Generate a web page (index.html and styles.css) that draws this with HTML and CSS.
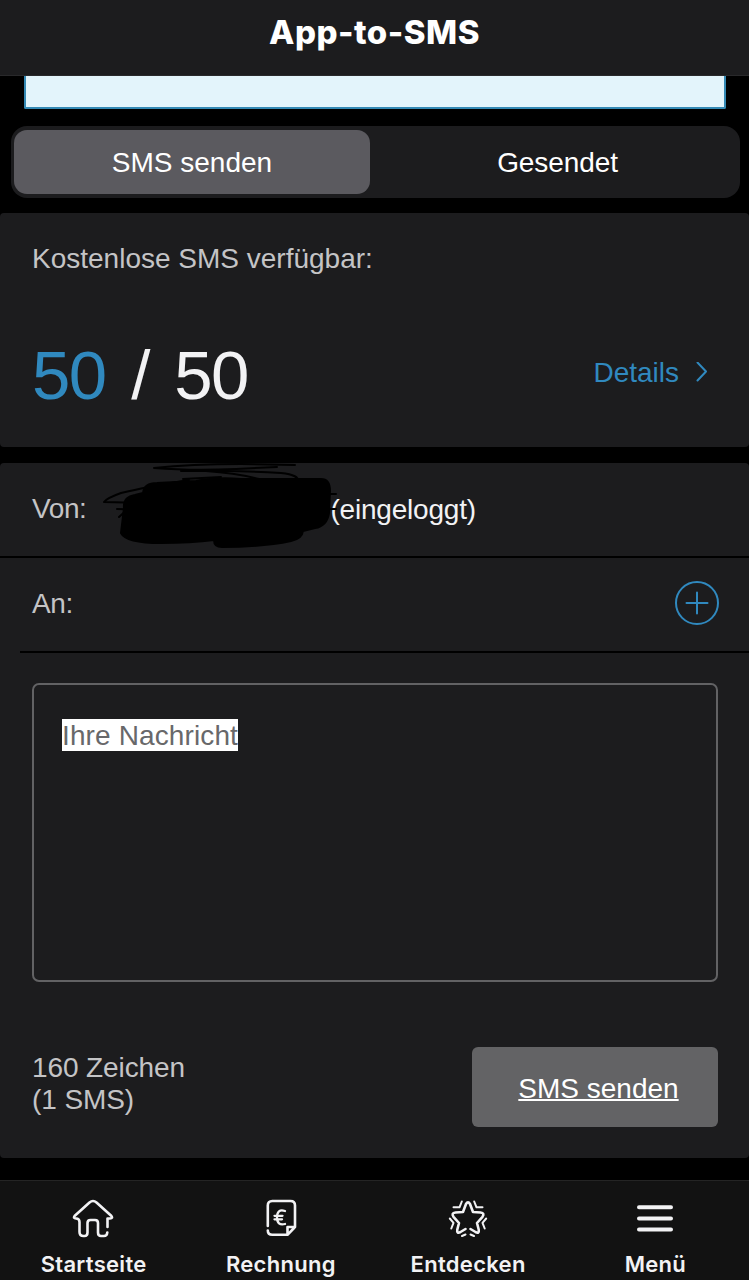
FILE: index.html
```html
<!DOCTYPE html>
<html lang="de">
<head>
    <meta charset="UTF-8">
    <meta name="viewport" content="width=device-width, initial-scale=1.0">
    <title>App-to-SMS</title>
    <link rel="stylesheet" href="styles.css">
</head>
<body>

<header class="header">
    <h1>App-to-SMS</h1>
</header>

<main>
    <div class="info-box"></div>

    <div class="tabs">
        <button class="tab active">SMS senden</button>
        <button class="tab">Gesendet</button>
    </div>

    <section class="card quota">
        <p class="label">Kostenlose SMS verfügbar:</p>
        <div class="quota-row">
            <p class="count"><span class="count-left">50</span> / 50</p>
            <a class="details">Details
                <svg width="14" height="22" viewBox="0 0 14 22"><path d="M2.5 0.5 L11 9.500 L2.5 18.500"/></svg>
            </a>
        </div>
    </section>

    <section class="card message">
        <div class="row">
            <span class="label">Von:</span>
            <svg class="scribble" width="236" height="93" viewBox="100 463 236 93">
                <path class="blob" d="M123 509 Q122 498 134 496 L142 494 Q143 484 156 484 L195 482 Q215 478 240 480 L320 480 Q329 480 329 492 L328 514 Q326 527 314 529 L302 532 Q301 540 290 542 Q262 548 221 548 Q213 548 213 541 Q190 544 160 544 Q125 544 120 534 Z"/>
                <path d="M294 466 L240 465 Q190 465 153 469 Q190 472 235 470 L276 468 M180 472 Q230 471 280 474 Q299 476 297 483 M205 472 Q235 474 258 480 M182 480 L220 478 M188 481 Q145 488 120 494 Q106 499 103 503 L145 504 M116 510 L150 511 M118 518 L128 509 M320 495 L335 495 M320 510 L335 510"/>
            </svg>
            <span class="value">(eingeloggt)</span>
        </div>
        <div class="row row-to">
            <span class="label">An:</span>
            <button class="add">
                <svg width="46" height="46" viewBox="0 0 46 46"><circle cx="23" cy="22" r="21"/><path d="M12.500 22 H33.500 M23 11.500 V32.500"/></svg>
            </button>
        </div>
        <div class="divider"></div>
        <div class="text-field"><span class="placeholder">Ihre Nachricht</span></div>
        <div class="send-row">
            <p class="label">160 Zeichen<br>(1 SMS)</p>
            <button class="send">SMS senden</button>
        </div>
    </section>
</main>

<nav class="nav">
    <a class="nav-item">
        <svg width="44" height="44" viewBox="0 0 44 44"><path d="M36.500 29 V20.500 H39 Q42.300 20.500 40.200 17.800 L25.500 4.500 Q22 1.500 18.500 4.500 L3.800 17.800 Q1.800 20.500 5 20.500 Q8.500 20.500 8.500 24 V34 Q8.500 38 12.500 38 H13.500 Q16.500 38 16.500 34.500 V25 Q16.500 22 19.500 22 H24 Q27 22 27 25 V34.500 Q27 38 30 38 H33 Q36 38 36.300 34.500"/></svg>
        <span>Startseite</span>
    </a>
    <a class="nav-item">
        <svg width="44" height="44" viewBox="-1.5 0 44 44"><path d="M8.300 28 V7.500 Q8.300 3 12.800 3 H31 Q35.500 3 35.500 7.500 V29 L28 36.800 H12.800 Q8.300 36.800 8.300 32.500 M35.500 29 H28 V36.800"/><path class="euro" d="M25.500 13 Q17.500 10.500 17.500 19.300 Q17.500 28 25.500 26 M15 17.800 H23 M15 21.300 H22.500"/></svg>
        <span>Rechnung</span>
    </a>
    <a class="nav-item">
        <svg width="44" height="44" viewBox="-1 0 44 44"><path class="star" d="M19.500 31 L14.500 34 Q10.500 36 11.300 31.500 L13 25 L7.500 18.800 Q5 15 9.500 14.500 L17 14 L20 6 Q22 2.800 24 6 L27 14 L34.500 14.500 Q39 15 36.500 18.800 L31 25 L32.700 31.500 Q33.500 36 29.500 34 L24.500 31"/><path class="rays" d="M15.800 3.500 L13.500 9.300 H7.500 M28.200 3.500 L30.500 9.300 H36.500 M3.800 20.500 L7.500 24.800 L5.300 30.500 M40.200 20.500 L36.500 24.800 L38.700 30.500 M16 38 L19.500 36.500 M28 38 L24.500 36.500"/></svg>
        <span>Entdecken</span>
    </a>
    <a class="nav-item">
        <svg width="44" height="44" viewBox="-1 0 44 44"><path class="bars" d="M6 9.300 H38 M6 20.500 H38 M6 31.500 H38"/></svg>
        <span>Menü</span>
    </a>
</nav>

</body>
</html>
```
FILE: styles.css
```css
* {
    box-sizing: border-box;
}
body {
    font-family: "Liberation Sans", Arial, sans-serif;
    font-size: 28px;
    line-height: 32px;
    margin: 0;
    height: 1280px;
    display: flex;
    flex-direction: column;
    background-color: #000;
    color: #f2f2f4;
    overflow: hidden;
}
h1, p {
    margin: 0;
}
button {
    font: inherit;
    color: inherit;
    border: none;
    padding: 0;
    background: none;
}
svg {
    display: block;
    fill: none;
    stroke: currentColor;
    stroke-width: 2;
    stroke-linecap: round;
    stroke-linejoin: round;
}
.header {
    height: 76px;
    padding-top: 12px;
    background-color: #1c1c1e;
    border-bottom: 1px solid #29292b;
    text-align: center;
}
.header h1 {
    font-family: Inter, sans-serif;
    font-size: 33px;
    line-height: 40px;
    font-weight: 800;
    letter-spacing: 0.5px;
    color: #fff;
}
main {
    flex: 1;
}
.info-box {
    height: 33px;
    margin: 0 23px 0 24px;
    background-color: #e3f4fb;
    border: 2px solid #3489b4;
    border-top: none;
    border-radius: 0 0 2px 2px;
}
.tabs {
    display: flex;
    height: 72px;
    margin: 17px 9px 15px 11px;
    padding: 4px 3px;
    background-color: #1c1c1e;
    border-radius: 16px;
}
.tab {
    flex: 1;
    padding: 2px 0 0 8px;
    border-radius: 13px;
    color: #fff;
    letter-spacing: -0.1px;
}
.tab.active {
    flex: 0 0 356px;
    padding-left: 0;
    background-color: #5b5a5f;
    letter-spacing: 0;
}
.card {
    background-color: #1c1c1e;
    border-radius: 4px;
}
.label {
    color: #c4c4c6;
}
.quota {
    height: 234px;
    padding: 30px 32px;
    margin-bottom: 16px;
}
.quota-row {
    display: flex;
    justify-content: space-between;
    align-items: center;
    margin-top: 61px;
    padding-right: 8px;
}
.count {
    font-size: 69px;
    line-height: 80px;
    letter-spacing: -1.6px;
    word-spacing: 8px;
}
.count-left {
    color: #3089bf;
}
.details {
    display: flex;
    align-items: center;
    gap: 16px;
    padding-bottom: 6px;
    color: #3089bf;
}
.message {
    height: 695px;
}
.row {
    display: flex;
    align-items: center;
    height: 95px;
    padding: 0 30px 2px 32px;
    border-bottom: 2px solid #000;
}
.row .label {
    letter-spacing: -0.4px;
}
.row .value {
    margin-left: -7px;
    padding-top: 2px;
    letter-spacing: -0.2px;
}
.row-to {
    justify-content: space-between;
    height: 93px;
    border-bottom: none;
}
.scribble {
    position: relative;
    z-index: 1;
    margin-left: 15px;
    color: #000;
}
.scribble .blob {
    fill: #000;
}
.add {
    color: #3089bf;
    margin-right: -1px;
}
.divider {
    height: 2px;
    margin-left: 20px;
    background-color: #000;
}
.text-field {
    height: 299px;
    margin: 30px 31px 65px 32px;
    padding: 34px 28px;
    border: 2px solid #626264;
    border-radius: 7px;
}
.placeholder {
    display: inline-block;
    padding-top: 1px;
    line-height: 31px;
    letter-spacing: 0.12px;
    background-color: #fff;
    color: #68686a;
}
.send-row {
    display: flex;
    justify-content: space-between;
    padding: 0 31px 0 32px;
}
.send-row .label {
    padding-top: 5px;
    letter-spacing: -0.1px;
}
.send {
    width: 246px;
    height: 80px;
    padding: 3px 0 0 7px;
    background-color: #636365;
    border-radius: 6px;
    color: #fff;
    text-decoration: underline;
    text-decoration-thickness: 2px;
}
.nav {
    display: flex;
    height: 100px;
    padding-top: 17px;
    background-color: #121212;
    border-top: 1px solid #242424;
}
.nav-item {
    flex: 1;
    display: flex;
    flex-direction: column;
    align-items: center;
    font-family: Inter, sans-serif;
    font-size: 22px;
    line-height: 28px;
    font-weight: 600;
    letter-spacing: 0.3px;
    gap: 8px;
}
.nav-item svg {
    margin-left: -2px;
    stroke-width: 2.6;
}
.nav-item .euro {
    stroke-width: 2.3;
}
.nav-item .bars {
    stroke-width: 4;
}
.nav-item .rays {
    stroke-width: 2;
}
```
